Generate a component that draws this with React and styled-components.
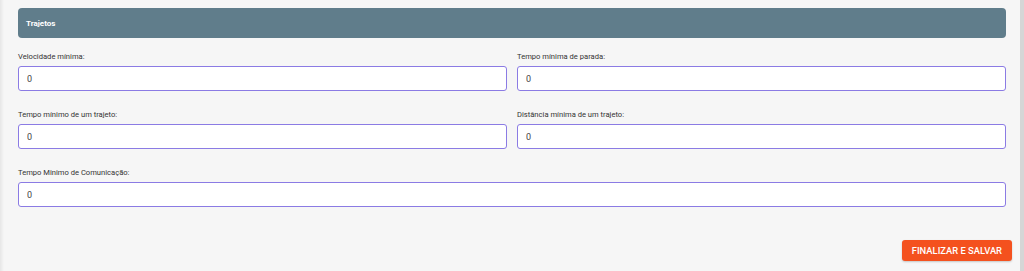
import styled, { createGlobalStyle } from "styled-components";

const GlobalStyle = createGlobalStyle`
  html, body {
    margin: 0;
    padding: 0;
    background: #f6f6f6;
    font-family: Roboto, "Liberation Sans", Arial, sans-serif;
  }
`

const Shell = styled.div`
  display: flex;
  width: 1024px;
  height: 271px;
  background: #f6f6f6;
`

const Content = styled.div`
  width: 1020px;
  box-sizing: border-box;
  padding: 8px 8px 0 18px;
  background: linear-gradient(to right, #e6e6e6 0px, #f6f6f6 4px);
`

const Rail = styled.div`
  width: 4px;
  background: #d6d6d6;
`

const SectionHeader = styled.div`
  height: 30px;
  margin-right: 6px;
  display: flex;
  align-items: center;
  padding-left: 8px;
  background: #607d8b;
  border-radius: 4px;
  color: #fff;
  font-size: 8px;
  font-weight: 700;
`

const Grid = styled.div`
  margin: 13px 6px 0 0;
  display: grid;
  grid-template-columns: 1fr 1fr;
  column-gap: 10px;
  row-gap: 18px;
`

const Field = styled.div`
  display: flex;
  flex-direction: column;
  gap: 3px;
  grid-column: ${(p) => (p.$full ? "1 / -1" : "auto")};
`

const Label = styled.label`
  font-size: 7.6px;
  line-height: 12px;
  color: #333;
`

const Input = styled.input`
  height: 25px;
  box-sizing: border-box;
  border: 1px solid #8b7be4;
  border-radius: 3px;
  background: #fff;
  padding: 0 8px;
  font-family: inherit;
  font-size: 9px;
  color: #444;
  outline: none;
`

const Footer = styled.div`
  display: flex;
  justify-content: flex-end;
  margin-top: 33px;
`

const SaveButton = styled.button`
  height: 21px;
  padding: 0 10px;
  border: none;
  border-radius: 3px;
  background: #f4511e;
  color: #fff;
  font-family: inherit;
  font-size: 9.4px;
  font-weight: 500;
  box-shadow: 0 1px 2px rgba(0, 0, 0, 0.2);
  cursor: pointer;
`

const fields = [
  { label: "Velocidade mínima:" },
  { label: "Tempo mínima de parada:" },
  { label: "Tempo mínimo de um trajeto:" },
  { label: "Distância mínima de um trajeto:" },
  { label: "Tempo Minimo de Comunicação:", full: true },
];

const App = () => {
  return (
    <>
      <GlobalStyle />
      <Shell>
        <Content>
          <SectionHeader>Trajetos</SectionHeader>
          <Grid>
            {fields.map((f) => (
              <Field key={f.label} $full={f.full}>
                <Label>{f.label}</Label>
                <Input defaultValue="0" />
              </Field>
            ))}
          </Grid>
          <Footer>
            <SaveButton>FINALIZAR E SALVAR</SaveButton>
          </Footer>
        </Content>
        <Rail />
      </Shell>
    </>
  )
}

export default App;
